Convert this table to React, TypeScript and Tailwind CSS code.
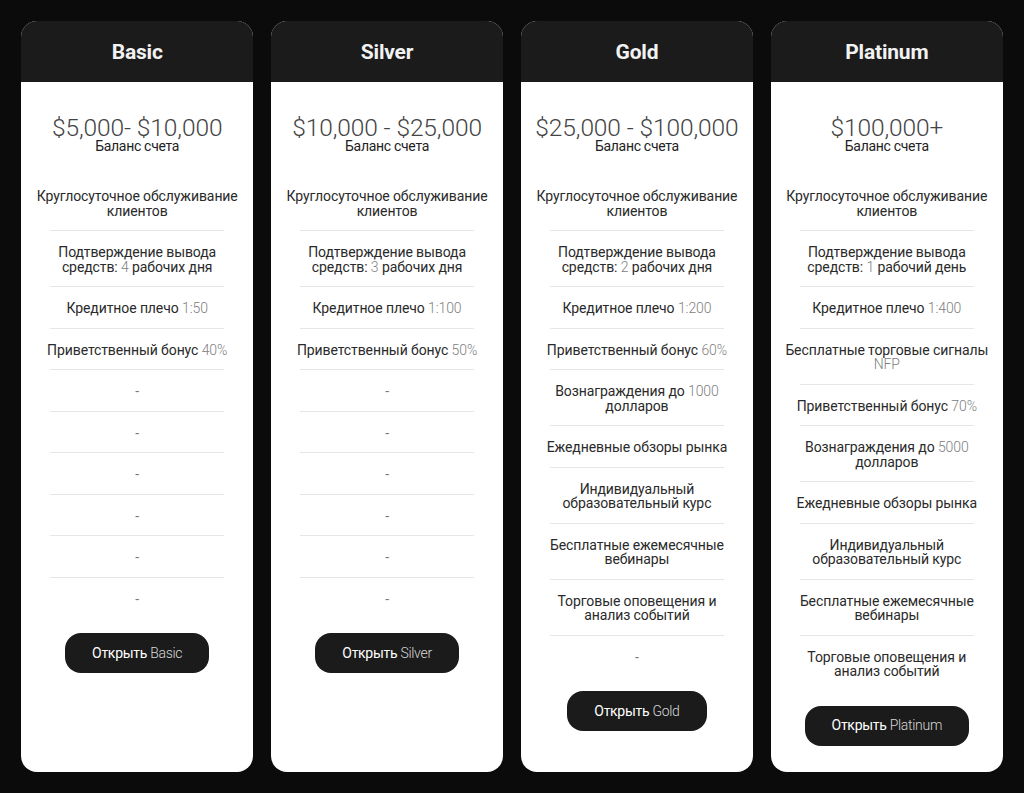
import React from "react";

type Item = { t?: string; v?: string; after?: string; br?: boolean };

const common1: Item = { t: "Круглосуточное обслуживание клиентов" };
const dash: Item = { t: "-" };
const alerts: Item = { t: "Торговые оповещения и", after: "анализ событий", br: true };

const plans: { name: string; price: string; items: Item[] }[] = [
  {
    name: "Basic",
    price: "$5,000- $10,000",
    items: [
      common1,
      { t: "Подтверждение вывода средств: ", v: "4", after: " рабочих дня" },
      { t: "Кредитное плечо ", v: "1:50" },
      { t: "Приветственный бонус ", v: "40%" },
      dash, dash, dash, dash, dash, dash,
    ],
  },
  {
    name: "Silver",
    price: "$10,000 - $25,000",
    items: [
      common1,
      { t: "Подтверждение вывода средств: ", v: "3", after: " рабочих дня" },
      { t: "Кредитное плечо ", v: "1:100" },
      { t: "Приветственный бонус ", v: "50%" },
      dash, dash, dash, dash, dash, dash,
    ],
  },
  {
    name: "Gold",
    price: "$25,000 - $100,000",
    items: [
      common1,
      { t: "Подтверждение вывода средств: ", v: "2", after: " рабочих дня" },
      { t: "Кредитное плечо ", v: "1:200" },
      { t: "Приветственный бонус ", v: "60%" },
      { t: "Вознаграждения до ", v: "1000", after: " долларов" },
      { t: "Ежедневные обзоры рынка" },
      { t: "Индивидуальный образовательный курс" },
      { t: "Бесплатные ежемесячные вебинары" },
      alerts,
      dash,
    ],
  },
  {
    name: "Platinum",
    price: "$100,000+",
    items: [
      common1,
      { t: "Подтверждение вывода средств: ", v: "1", after: " рабочий день" },
      { t: "Кредитное плечо ", v: "1:400" },
      { t: "Бесплатные торговые сигналы ", v: "NFP" },
      { t: "Приветственный бонус ", v: "70%" },
      { t: "Вознаграждения до ", v: "5000", after: " долларов" },
      { t: "Ежедневные обзоры рынка" },
      { t: "Индивидуальный образовательный курс" },
      { t: "Бесплатные ежемесячные вебинары" },
      alerts,
    ],
  },
];

export default function App() {
  return (
    <div
      className="min-h-[793px] w-[1024px] bg-[#0b0b0b] px-[21px] pt-[21px] pb-[22px]"
      style={{ fontFamily: "Roboto, 'Liberation Sans', sans-serif" }}
    >
      <div className="grid grid-cols-4 gap-[17.5px] items-stretch">
        {plans.map((p) => (
          <div key={p.name} className="flex flex-col overflow-hidden rounded-[16px] bg-white">
            <div className="flex h-[61px] items-center justify-center bg-[#1b1b1b] pt-[3px]">
              <span className="text-[21px] font-bold text-[#f2f2f2] tracking-[-0.2px]">{p.name}</span>
            </div>
            <div className="flex flex-1 flex-col items-center px-[14px] pb-[26px]">
              <div className="flex h-[93px] flex-col items-center pt-[35px]">
                <div className="whitespace-nowrap text-[24.5px] font-light leading-[22px] text-[#444] tracking-[-0.1px]">{p.price}</div>
                <div className="text-[14px] leading-[14px] text-[#222] tracking-[-0.3px]">Баланс счета</div>
              </div>
              <div className="flex w-full flex-col">
                {p.items.map((it, i) => (
                  <div key={i} className="flex flex-col items-center">
                    {i > 0 && <div className="h-px w-[174px] bg-[#e6e6e6]" />}
                    <div className="pt-[14px] pb-[12px] text-center text-[14px] leading-[14.5px] text-[#2a2a2a] tracking-[-0.1px]">
                      {it.t === "-" ? (
                        <span className="text-[#777]">-</span>
                      ) : (
                        <>
                          {it.t}
                          {it.v && <span className="font-light text-[#808080]">{it.v}</span>}
                          {it.br && <br />}
                          {it.after}
                        </>
                      )}
                    </div>
                  </div>
                ))}
              </div>
              <button className="mt-[15px] h-[40px] rounded-[16px] bg-[#1b1b1b] px-[27px] text-[14px] text-white tracking-[-0.3px]">
                Открыть <span className="font-light text-[#d8d8d8]">{p.name}</span>
              </button>
            </div>
          </div>
        ))}
      </div>
    </div>
  );
}
